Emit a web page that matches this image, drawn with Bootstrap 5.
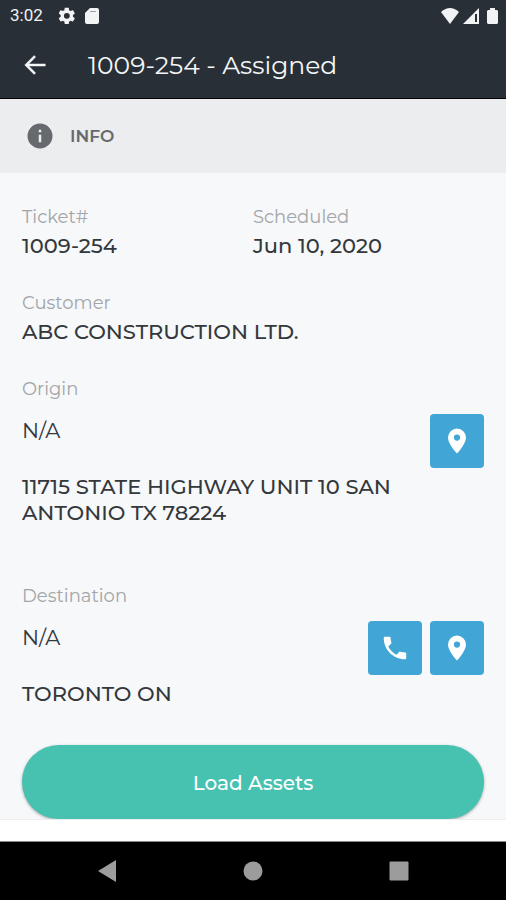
<!DOCTYPE html>
<html lang="en">
<head>
<meta charset="utf-8">
<meta name="viewport" content="width=device-width, initial-scale=1">
<title>1009-254 - Assigned</title>
<link href="https://cdn.jsdelivr.net/npm/bootstrap@5.3.0/dist/css/bootstrap.min.css" rel="stylesheet">
<style>
  body { font-family: Montserrat, Inter, sans-serif; background: #f6f8fa; color: #34383c; }
  svg { display: block; fill: currentColor; }
  .top-area { background: #282f36; border-bottom: 1px solid #000; }
  .status-bar { height: 31px; padding: 0 8px 0 10px; font: 17px/31px Roboto, sans-serif; color: #f1f3f5; }
  .app-bar { height: 67px; padding: 0 22px; color: #f4f6f8; }
  .app-title { font-size: 25px; line-height: 32px; margin-left: 40px; }
  .info-bar { height: 74px; padding: 0 25px; background: #ebedee; color: #66696d; }
  .info-title { font-size: 17px; line-height: 24px; font-weight: 600; margin-left: 15px; }
  .details { padding: 32px 22px 0; }
  .field-label { font-size: 18px; line-height: 24px; color: #a3a5a8; font-weight: 400; margin: 0; }
  .field-value { font-size: 21px; line-height: 26px; font-weight: 500; margin: 0; }
  .field-label + .field-value { margin-top: 4px; }
  .field-group { margin-bottom: 32px; }
  .place-row { margin: 13px 0 6px; }
  .place-name { font-size: 21px; line-height: 26px; padding-top: 4px; }
  .origin { margin-bottom: 58px; }
  .destination { margin-bottom: 38px; }
  .tile-btn { width: 54px; height: 54px; background: #41a6d6; color: #fff; border: 0; border-radius: 4px; }
  .tile-btn:hover { background: #3596c4; color: #fff; }
  .load-btn { height: 74px; background: #47c2b1; color: #fff; border: 0; font-size: 20px; font-weight: 500; padding-top: 8px; box-shadow: 0 1px 3px rgba(0, 0, 0, .35); }
  .load-btn:hover { background: #3bb09f; color: #fff; }
  .footer-strip { height: 23px; background: #fff; border-top: 1px solid #eceef0; border-bottom: 1px solid #888; }
  .system-nav { height: 58px; background: #000; padding: 0 34px; }
  .system-nav .btn { color: #9c9c9c; border: 0; }
</style>
<script src="https://cdn.jsdelivr.net/npm/bootstrap@5.3.0/dist/js/bootstrap.bundle.min.js"></script>
</head>
<body class="d-flex flex-column min-vh-100">
<header class="top-area">
  <div class="status-bar d-flex align-items-center">
    <span>3:02</span>
    <svg class="ms-3 me-2" width="18" height="18" viewBox="4 3 18 18" aria-hidden="true"><path transform="translate(2 2) scale(.82)" d="M19.4 13c.1-.3.1-.7.1-1s0-.7-.1-1l2.1-1.600c.2-.2.3-.4.1-.7l-2-3.400c-.1-.2-.4-.3-.6-.2l-2.500 1c-.5-.4-1.100-.7-1.700-1l-.4-2.600c0-.3-.2-.5-.5-.5h-4c-.2 0-.4.200-.5.400L9 5.100c-.6.200-1.200.6-1.700 1l-2.500-1c-.2-.1-.5 0-.6.200l-2 3.400c-.1.200-.1.500.1.700L4.500 11c0 .3-.1.700-.1 1s0 .7.100 1l-2.200 1.600c-.2.200-.2.400-.1.700l2 3.400c.1.200.4.300.6.200l2.500-1c.5.400 1.100.7 1.700 1l.4 2.600c0 .3.200.4.500.4h4c.2 0 .4-.2.5-.4l.4-2.600c.6-.2 1.200-.6 1.700-1l2.500 1c.2.100.5 0 .6-.2l2-3.400c.1-.2.1-.5-.1-.7zM12 15.600a3.600 3.600 0 1 1 0-7.200 3.600 3.600 0 0 1 0 7.200z"/></svg>
    <svg width="14" height="16" viewBox="0 0 14 16" aria-hidden="true"><path fill-rule="evenodd" d="M5 0h7a2 2 0 0 1 2 2v12a2 2 0 0 1-2 2H2a2 2 0 0 1-2-2V5z"/><path fill="#9ba0a4" d="M5 3h6v1H5z"/></svg>
    <svg class="ms-auto" width="18" height="16" viewBox="0 0 18 16" aria-hidden="true"><path d="M0 4Q9-4 18 4L9 16z"/></svg>
    <svg class="ms-1" width="16" height="16" viewBox="0 0 16 16" aria-hidden="true"><path fill-rule="evenodd" d="M16 0v16H0zM12 6v8h2V6z"/></svg>
    <svg class="ms-2" width="11" height="16" viewBox="0 0 11 16" aria-hidden="true"><path d="M3 0h5v2h2l1 1v12l-1 1H1l-1-1V3l1-1h2z"/></svg>
  </div>
  <div class="app-bar d-flex align-items-center">
    <button type="button" class="btn p-0 border-0 text-reset" aria-label="Back"><svg width="26" height="26" viewBox="0 0 24 24"><path stroke="currentColor" stroke-width=".4" d="M21.500 11H6.300l6.300-6.300-1.400-1.400L2.500 12l8.700 8.700 1.400-1.400L6.300 13h15.200z"/></svg></button>
    <h1 class="app-title mb-0 fw-normal">1009-254 - Assigned</h1>
  </div>
</header>
<section class="info-bar d-flex align-items-center">
  <svg width="30" height="30" viewBox="0 0 24 24" aria-hidden="true"><path d="M12 2a10 10 0 1 0 0 20 10 10 0 0 0 0-20zm1 15h-2v-6h2zm0-8h-2V7h2z"/></svg>
  <h2 class="info-title mb-0">INFO</h2>
</section>
<main class="details">
  <div class="row g-0 field-group">
    <div class="col-6"><p class="field-label">Ticket#</p><p class="field-value">1009-254</p></div>
    <div class="col-6"><p class="field-label">Scheduled</p><p class="field-value">Jun 10, 2020</p></div>
  </div>
  <div class="field-group"><p class="field-label">Customer</p><p class="field-value">ABC CONSTRUCTION LTD.</p></div>
  <section class="origin">
    <h3 class="field-label">Origin</h3>
    <div class="place-row d-flex justify-content-between">
      <div class="place-name">N/A</div>
      <button type="button" class="btn tile-btn p-0 d-flex align-items-center justify-content-center" aria-label="Show origin on map"><svg width="30" height="30" viewBox="0 0 24 24"><path d="M12 2a7.200 7.200 0 0 0-7.200 7.200C4.800 14.600 12 22 12 22s7.200-7.400 7.200-12.800A7.200 7.200 0 0 0 12 2zm0 9.700a2.500 2.500 0 1 1 0-5 2.500 2.500 0 0 1 0 5z"/></svg></button>
    </div>
    <p class="field-value">11715 STATE HIGHWAY UNIT 10 SAN<br>ANTONIO TX 78224</p>
  </section>
  <section class="destination">
    <h3 class="field-label">Destination</h3>
    <div class="place-row d-flex justify-content-between">
      <div class="place-name">N/A</div>
      <div class="d-flex gap-2">
        <button type="button" class="btn tile-btn p-0 d-flex align-items-center justify-content-center" aria-label="Call destination"><svg width="30" height="30" viewBox="0 0 24 24"><path d="M6.600 10.800c1.400 2.800 3.800 5.100 6.600 6.600l2.200-2.200c.3-.3.700-.4 1-.2 1.100.4 2.300.6 3.600.6.600 0 1 .4 1 1V20c0 .6-.4 1-1 1C10.600 21 3 13.400 3 4c0-.6.500-1 1-1h3.500c.6 0 1 .4 1 1 0 1.300.2 2.500.6 3.600.1.300 0 .7-.2 1z"/></svg></button>
        <button type="button" class="btn tile-btn p-0 d-flex align-items-center justify-content-center" aria-label="Show destination on map"><svg width="30" height="30" viewBox="0 0 24 24"><path d="M12 2a7.200 7.200 0 0 0-7.200 7.200C4.800 14.600 12 22 12 22s7.200-7.400 7.200-12.800A7.200 7.200 0 0 0 12 2zm0 9.700a2.500 2.500 0 1 1 0-5 2.500 2.500 0 0 1 0 5z"/></svg></button>
      </div>
    </div>
    <p class="field-value">TORONTO ON</p>
  </section>
  <button type="button" class="btn load-btn rounded-pill w-100">Load Assets</button>
</main>
<footer class="mt-auto">
  <div class="footer-strip"></div>
  <nav class="system-nav d-flex align-items-center justify-content-around" aria-label="System">
    <button type="button" class="btn p-0" aria-label="Back"><svg width="20" height="22" viewBox="0 0 20 22"><path d="M19 0v22L1 11z"/></svg></button>
    <button type="button" class="btn p-0" aria-label="Home"><svg width="20" height="20" viewBox="0 0 20 20"><circle cx="10" cy="10" r="9.500"/></svg></button>
    <button type="button" class="btn p-0" aria-label="Recent apps"><svg width="20" height="20" viewBox="0 0 20 20"><rect x=".5" y=".5" width="19" height="19" rx="1"/></svg></button>
  </nav>
</footer>
</body>
</html>
